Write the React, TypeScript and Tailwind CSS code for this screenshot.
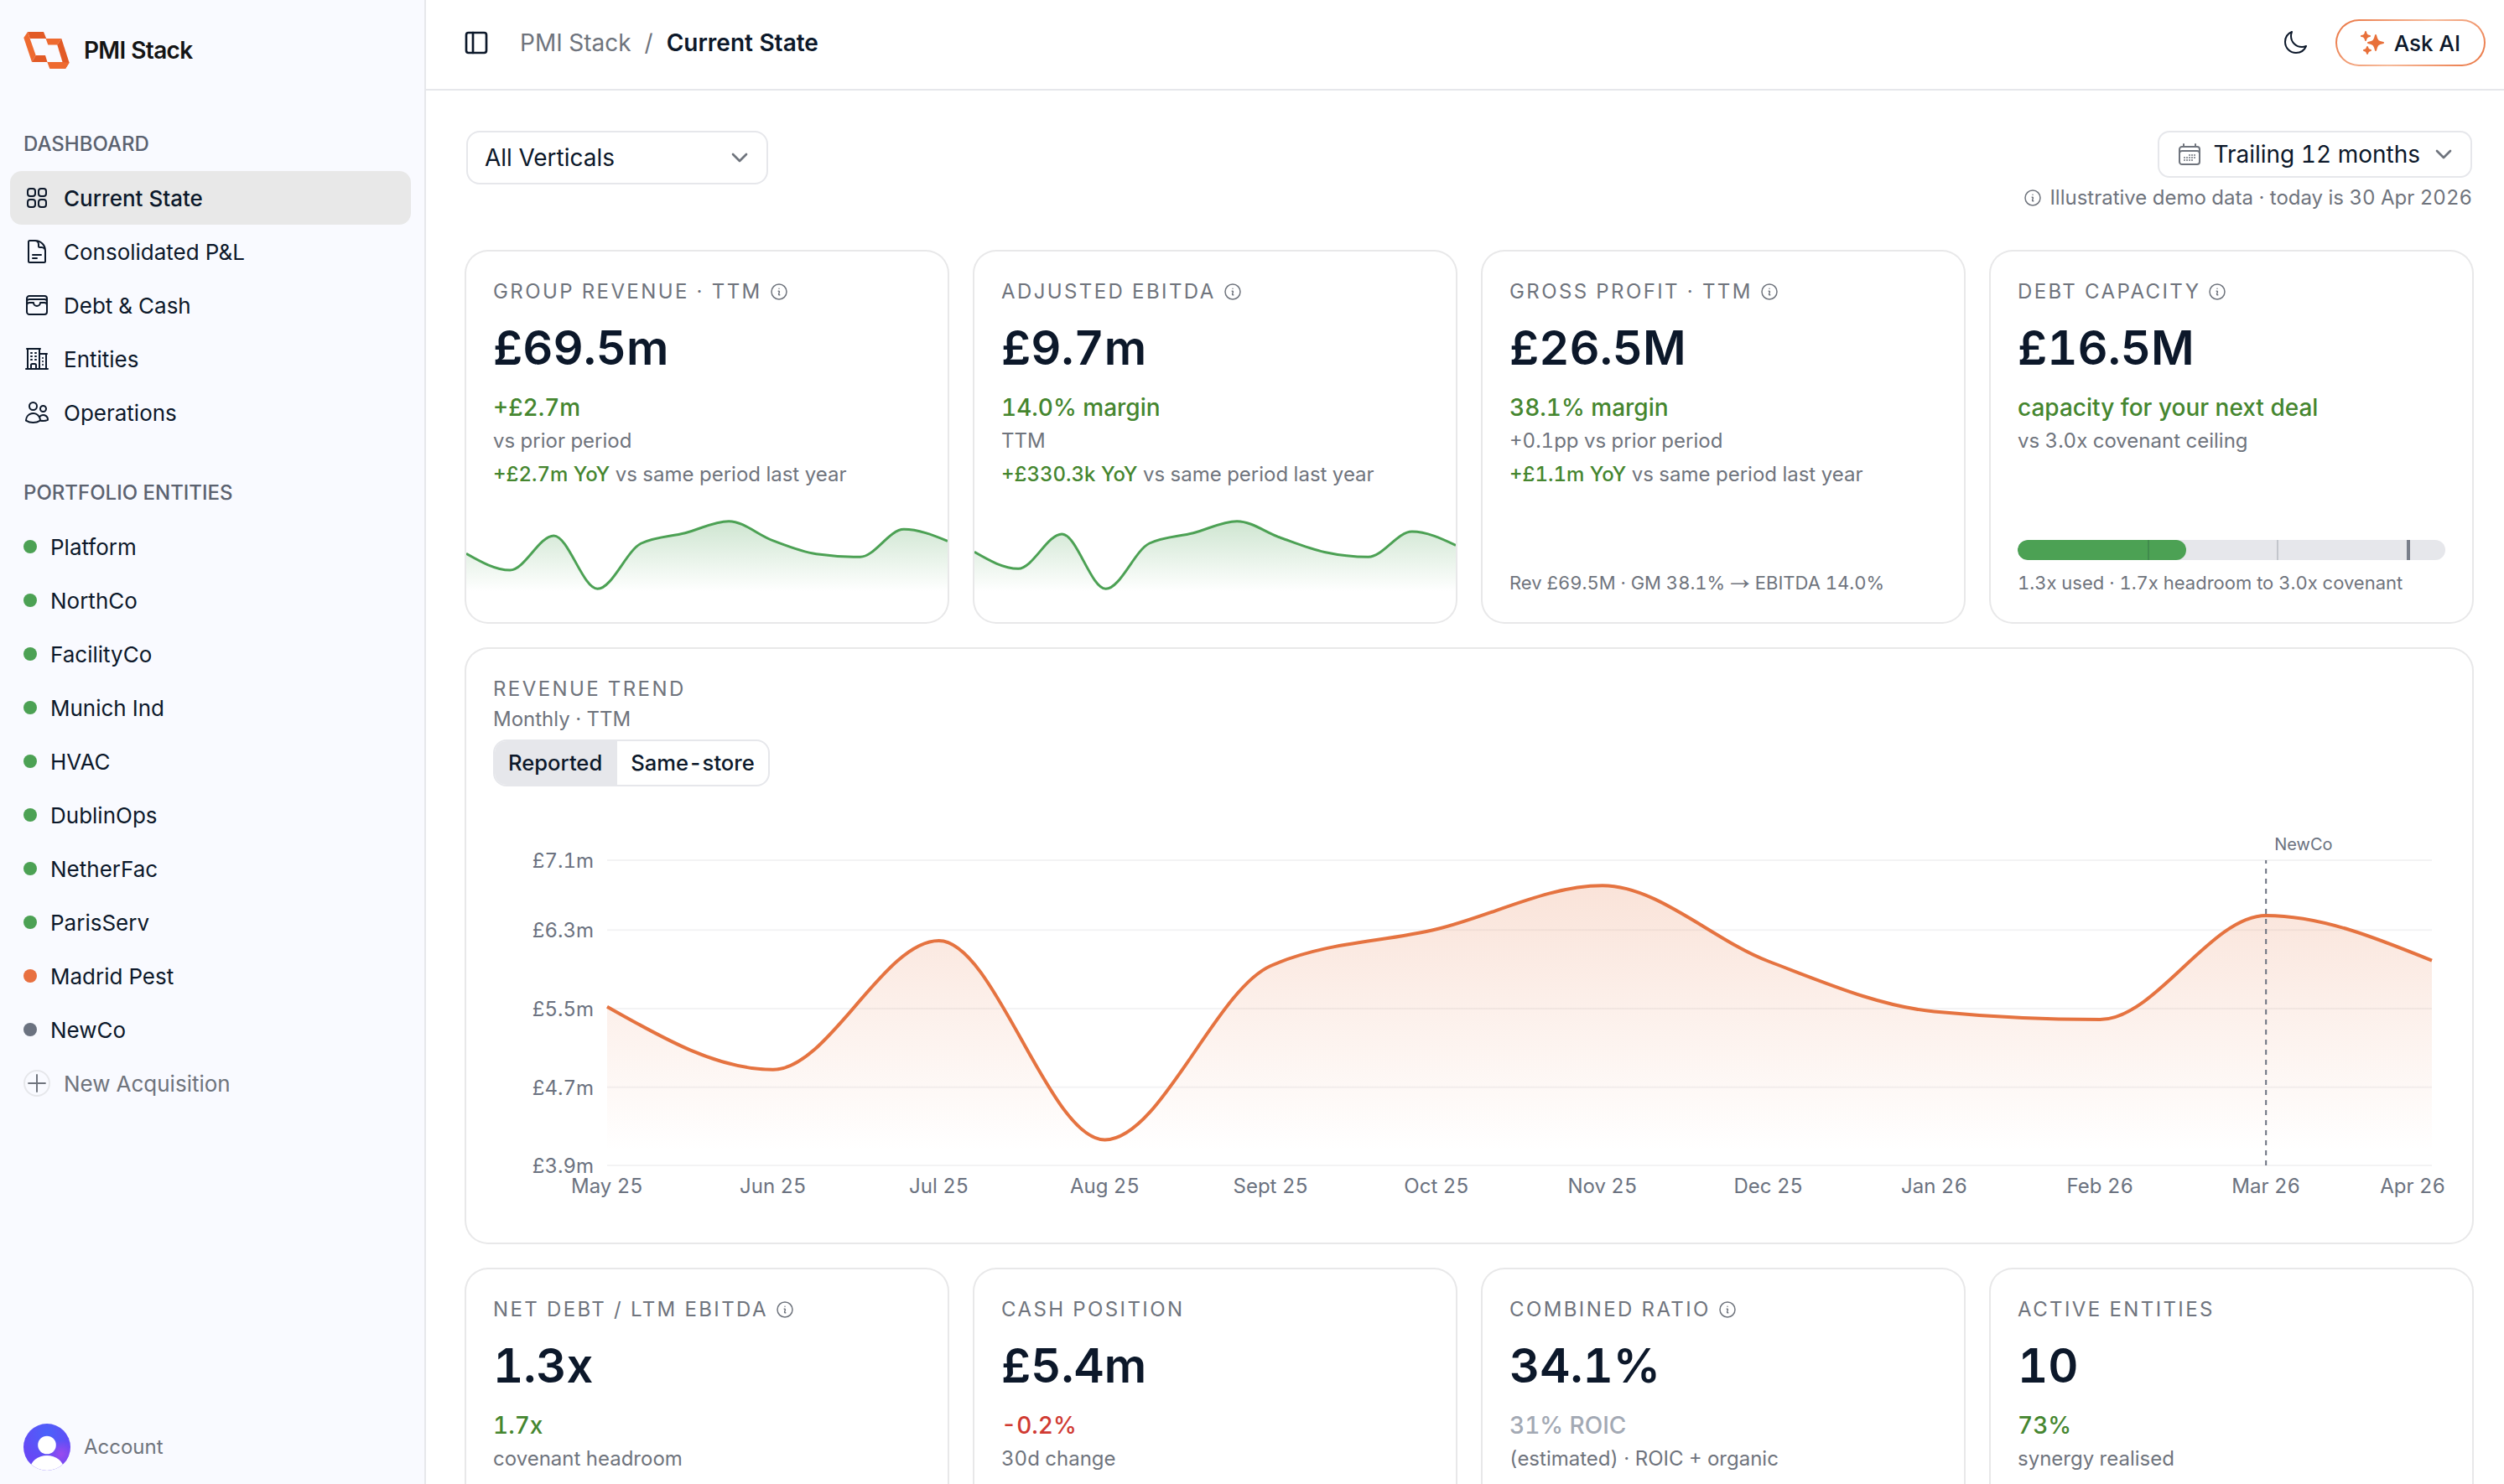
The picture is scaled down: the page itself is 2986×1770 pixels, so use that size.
import React from 'react';
import clsx from 'clsx';
import { ChevronDown, PanelLeft, Plus } from 'lucide-react';
import {
  HiOutlineBuildingOffice2,
  HiOutlineCalendarDays,
  HiOutlineDocumentText,
  HiOutlineInformationCircle,
  HiOutlineMoon,
  HiOutlineSquares2X2,
  HiOutlineUsers,
  HiOutlineWallet,
  HiSparkles,
} from 'react-icons/hi2';

type Tone = 'positive' | 'negative' | 'muted';

interface Kpi {
  label: string;
  info?: boolean;
  value: string;
  delta: string;
  tone: Tone;
  note: string;
  yoy?: string;
  footer?: React.ReactNode;
}

const NAV = [
  { label: 'Current State', icon: HiOutlineSquares2X2, active: true },
  { label: 'Consolidated P&L', icon: HiOutlineDocumentText },
  { label: 'Debt & Cash', icon: HiOutlineWallet },
  { label: 'Entities', icon: HiOutlineBuildingOffice2 },
  { label: 'Operations', icon: HiOutlineUsers },
];

const ENTITIES = [
  { name: 'Platform', dot: 'bg-[#4ca154]' },
  { name: 'NorthCo', dot: 'bg-[#4ca154]' },
  { name: 'FacilityCo', dot: 'bg-[#4ca154]' },
  { name: 'Munich Ind', dot: 'bg-[#4ca154]' },
  { name: 'HVAC', dot: 'bg-[#4ca154]' },
  { name: 'DublinOps', dot: 'bg-[#4ca154]' },
  { name: 'NetherFac', dot: 'bg-[#4ca154]' },
  { name: 'ParisServ', dot: 'bg-[#4ca154]' },
  { name: 'Madrid Pest', dot: 'bg-[#e87040]' },
  { name: 'NewCo', dot: 'bg-[#6b7280]' },
];

const MONTHS = [
  'May 25', 'Jun 25', 'Jul 25', 'Aug 25', 'Sept 25', 'Oct 25',
  'Nov 25', 'Dec 25', 'Jan 26', 'Feb 26', 'Mar 26', 'Apr 26',
];

// y positions inside each svg
const REVENUE_SPARK = [48.3, 68, 27, 90.3, 36, 23.7, 9.7, 32.6, 48.7, 52.3, 19.3, 33.3];
const EBITDA_SPARK = [46.3, 66.3, 25, 90.3, 36, 23.7, 9.7, 29.5, 46.5, 52.3, 22, 38.3];
const TREND = [262.7, 337.8, 184, 421.5, 214, 170.3, 118.3, 208.5, 268.5, 278, 154, 207.7];
const GRID = [
  { label: '£7.1m', y: 88 },
  { label: '£6.3m', y: 171.3 },
  { label: '£5.5m', y: 265 },
  { label: '£4.7m', y: 358.7 },
  { label: '£3.9m', y: 452 },
];

// Monotone cubic interpolation (same maths as d3's curveMonotoneX)
function monotonePath(ys: number[], x0: number, x1: number) {
  const h = (x1 - x0) / (ys.length - 1);
  const n = ys.length;
  const slopes = ys.slice(1).map((y, i) => (y - ys[i]) / h);
  const t = new Array<number>(n).fill(0);
  for (let i = 1; i < n - 1; i++) {
    const a = slopes[i - 1];
    const b = slopes[i];
    const p = (a + b) / 2;
    t[i] = (Math.sign(a) + Math.sign(b)) * Math.min(Math.abs(a), Math.abs(b), 0.5 * Math.abs(p)) || 0;
  }
  t[0] = (3 * slopes[0] - t[1]) / 2;
  t[n - 1] = (3 * slopes[n - 2] - t[n - 2]) / 2;

  let d = `M${x0},${ys[0]}`;
  for (let i = 0; i < n - 1; i++) {
    const xa = x0 + h * i;
    const xb = xa + h;
    d += `C${xa + h / 3},${ys[i] + (t[i] * h) / 3} ${xb - h / 3},${ys[i + 1] - (t[i + 1] * h) / 3} ${xb},${ys[i + 1]}`;
  }
  return d;
}

const Logo = () => (
  <svg width="56" height="48" viewBox="28 36 56 48">
    <path d="M33 38H52L55.2 46.1H35.7Z" fill="#e25a26" />
    <path d="M33 38L28.3 44.9L38 73.9L42.7 66.1L35.7 46.1Z" fill="#ee6a30" />
    <path d="M42.7 66.1H54L56.5 73.9H38Z" fill="#e25a26" />
    <path d="M54.6 46.1H73.3L68.3 53.5H57.3Z" fill="#ee6a30" />
    <path d="M73.3 46.1L82.6 74.7L78 82L74.5 73.9L68.3 53.5Z" fill="#e25a26" />
    <path d="M56.3 73.9H74.5L82.6 74.7L78 82H59.3Z" fill="#ee6a30" />
  </svg>
);

const Avatar = () => (
  <svg width="56" height="56" viewBox="0 0 56 56">
    <defs>
      <radialGradient id="avatarBlue" cx="0.5" cy="0.2" r="0.6">
        <stop offset="0" stopColor="#4a62fa" />
        <stop offset="1" stopColor="#6648f5" />
      </radialGradient>
      <radialGradient id="avatarPink" cx="0.8" cy="0.65" r="0.3">
        <stop offset="0" stopColor="#9a4bee" />
        <stop offset="1" stopColor="#9a4bee" stopOpacity="0" />
      </radialGradient>
      <clipPath id="avatarClip">
        <circle cx="28" cy="28" r="28" />
      </clipPath>
    </defs>
    <g clipPath="url(#avatarClip)">
      <rect width="56" height="56" fill="url(#avatarBlue)" />
      <rect width="56" height="56" fill="url(#avatarPink)" />
      <circle cx="28" cy="25.5" r="10.8" fill="#fff" />
      <ellipse cx="28" cy="54" rx="20" ry="16" fill="#fff" />
    </g>
  </svg>
);

const Sidebar = () => (
  <aside className="flex w-[508px] shrink-0 flex-col border-r-2 border-[#e6e7eb] bg-[#f9faff]">
    <div className="flex h-[120px] items-center gap-4 pl-7">
      <Logo />
      <span className="text-[28px] font-semibold tracking-tight text-[#141414]">PMI Stack</span>
    </div>

    <div className="flex h-[84px] items-center pt-5 pl-7 text-[24px] font-medium text-[#5b6270]">DASHBOARD</div>
    <nav className="flex flex-col pr-4 pl-3">
      {NAV.map(({ label, icon: Icon, active }) => (
        <a
          key={label}
          className={clsx(
            'flex h-16 items-center gap-4 rounded-[14px] pl-4 text-[26px]',
            active && 'bg-[#e8e8e8] font-medium'
          )}
        >
          <Icon size={32} />
          {label}
        </a>
      ))}
    </nav>

    <div className="flex h-24 items-center pt-8 pl-7 text-[24px] font-medium text-[#5b6270]">PORTFOLIO ENTITIES</div>
    <div className="flex flex-col pl-7 text-[26px]">
      {ENTITIES.map((entity) => (
        <a key={entity.name} className="flex h-16 items-center gap-4">
          <span className={clsx('size-4 rounded-full', entity.dot)} />
          {entity.name}
        </a>
      ))}
      <button className="flex h-16 items-center gap-4 text-[#6f747d]">
        <span className="flex size-8 items-center justify-center rounded-full border-2 border-[#e6e7eb]">
          <Plus size={34} strokeWidth={1.4} className="shrink-0" />
        </span>
        New Acquisition
      </button>
    </div>

    <div className="mt-auto flex items-center gap-4 pb-4 pl-7 text-[24px] text-[#6f747d]">
      <Avatar />
      Account
    </div>
  </aside>
);

const Header = () => (
  <header className="flex h-[108px] shrink-0 items-center justify-between border-b-2 border-[#e6e7eb] pr-[22px] pb-1 pl-11">
    <div className="flex items-center text-[28px]">
      <PanelLeft size={32} />
      <div className="flex gap-4 pl-9">
        <span className="text-[#6f747d]">PMI Stack</span>
        <span className="text-[#6f747d]">/</span>
        <span className="font-semibold">Current State</span>
      </div>
    </div>
    <div className="flex items-center gap-8">
      <HiOutlineMoon size={32} />
      <div className="rounded-full bg-linear-135 from-[#e8703a] via-[#f6bb9b] to-[#e8703a] p-[2px]">
        <button className="flex h-[52px] items-center gap-2.5 rounded-full bg-white pr-7 pl-[26px] text-[26px] font-medium">
          <HiSparkles size={32} className="-scale-x-100 text-[#e8703a]" />
          Ask AI
        </button>
      </div>
    </div>
  </header>
);

const Filters = () => (
  <div className="flex items-start justify-between">
    <button className="flex h-16 w-[360px] items-center justify-between rounded-2xl border-2 border-[#e6e7eb] pr-4 pl-5 text-[28px]">
      All Verticals
      <ChevronDown size={32} className="text-[#6f747d]" />
    </button>
    <div className="flex flex-col items-end">
      <button className="flex h-14 items-center gap-3 rounded-[14px] border-2 border-[#e6e7eb] pr-4 pl-5 text-[28px]">
        <HiOutlineCalendarDays size={32} className="text-[#6f747d]" />
        Trailing 12 months
        <ChevronDown size={32} className="text-[#6f747d]" />
      </button>
      <div className="mt-2 flex h-8 items-center gap-2 text-[24px] text-[#6f747d]">
        <HiOutlineInformationCircle size={24} />
        Illustrative demo data · today is 30 Apr 2026
      </div>
    </div>
  </div>
);

const Sparkline = ({ id, points }: { id: string; points: number[] }) => {
  const line = monotonePath(points, 0, 574);
  return (
    <svg width="574" height="98" viewBox="0 0 574 98" className="-mx-8">
      <defs>
        <linearGradient id={id} x1="0" y1="0" x2="0" y2="1">
          <stop offset="0" stopColor="#4ca154" stopOpacity="0.27" />
          <stop offset="0.95" stopColor="#4ca154" stopOpacity="0" />
        </linearGradient>
      </defs>
      <path d={`${line}L574,98L0,98Z`} fill={`url(#${id})`} />
      <path d={line} fill="none" stroke="#4ca154" strokeWidth="3" />
    </svg>
  );
};

const CovenantBar = ({ used, covenant, max }: { used: number; covenant: number; max: number }) => {
  const pct = (v: number) => `${(v / max) * 100}%`;
  return (
    <div className="relative mb-3 h-6 overflow-hidden rounded-full bg-[#e6e7eb]">
      <div className="h-full rounded-full bg-[#4ca154]" style={{ width: pct(used) }} />
      <div className="absolute inset-y-0 w-0.5 bg-[#0c182a]/16" style={{ left: pct(1) }} />
      <div className="absolute inset-y-0 w-0.5 bg-[#0c182a]/16" style={{ left: pct(2) }} />
      <div className="absolute inset-y-0 w-1 bg-[#787e8a]" style={{ left: pct(covenant) }} />
    </div>
  );
};

const TONES: Record<Tone, string> = {
  positive: 'text-[#45862f]',
  negative: 'text-[#d03a32]',
  muted: 'text-[#a3a9b4]',
};

const TOP_KPIS: Kpi[] = [
  {
    label: 'GROUP REVENUE · TTM',
    info: true,
    value: '£69.5m',
    delta: '+£2.7m',
    tone: 'positive',
    note: 'vs prior period',
    yoy: '+£2.7m YoY',
    footer: <Sparkline id="sparkRevenue" points={REVENUE_SPARK} />,
  },
  {
    label: 'ADJUSTED EBITDA',
    info: true,
    value: '£9.7m',
    delta: '14.0% margin',
    tone: 'positive',
    note: 'TTM',
    yoy: '+£330.3k YoY',
    footer: <Sparkline id="sparkEbitda" points={EBITDA_SPARK} />,
  },
  {
    label: 'GROSS PROFIT · TTM',
    info: true,
    value: '£26.5M',
    delta: '38.1% margin',
    tone: 'positive',
    note: '+0.1pp vs prior period',
    yoy: '+£1.1m YoY',
    footer: (
      <p className="text-[22px] leading-[30px] text-[#6f747d]">
        Rev £69.5M · GM 38.1%{' '}
        <span className="font-['Noto_Sans_Math','Noto_Sans','Liberation_Serif'] text-[23.5px] leading-none">→</span> EBITDA
        14.0%
      </p>
    ),
  },
  {
    label: 'DEBT CAPACITY',
    info: true,
    value: '£16.5M',
    delta: 'capacity for your next deal',
    tone: 'positive',
    note: 'vs 3.0x covenant ceiling',
    footer: (
      <div>
        <CovenantBar used={1.3} covenant={3} max={3.3} />
        <p className="text-[22px] leading-[30px] text-[#6f747d]">1.3x used · 1.7x headroom to 3.0x covenant</p>
      </div>
    ),
  },
];

const BOTTOM_KPIS: Kpi[] = [
  { label: 'NET DEBT / LTM EBITDA', info: true, value: '1.3x', delta: '1.7x', tone: 'positive', note: 'covenant headroom' },
  { label: 'CASH POSITION', value: '£5.4m', delta: '-0.2%', tone: 'negative', note: '30d change' },
  { label: 'COMBINED RATIO', info: true, value: '34.1%', delta: '31% ROIC', tone: 'muted', note: '(estimated) · ROIC + organic' },
  { label: 'ACTIVE ENTITIES', value: '10', delta: '73%', tone: 'positive', note: 'synergy realised' },
];

const KpiCard = ({ kpi }: { kpi: Kpi }) => (
  <div className="flex h-[442px] flex-col rounded-[26px] p-8 ring-2 ring-[#e8e8e9]">
    <div className="flex h-8 items-center gap-2 text-[24px] leading-8 tracking-widest text-[#6f747d]">
      {kpi.label}
      {kpi.info && <HiOutlineInformationCircle size={24} />}
    </div>
    <div className="mt-4 text-[56px] leading-[70px] font-semibold">{kpi.value}</div>
    <div className={clsx('mt-4 text-[28px] leading-10 font-medium', TONES[kpi.tone])}>{kpi.delta}</div>
    <div className="mt-1 text-[24px] leading-8 text-[#6f747d]">{kpi.note}</div>
    {kpi.yoy && (
      <div className="mt-2 text-[24px] leading-8 text-[#6f747d]">
        <span className="font-medium text-[#45862f]">{kpi.yoy}</span> vs same period last year
      </div>
    )}
    <div className="mt-auto">{kpi.footer}</div>
  </div>
);

const TrendChart = () => {
  const x = (i: number) => 136 + (2176 / 11) * i;
  const line = monotonePath(TREND, 136, 2312);
  return (
    <svg width="2328" height="512" viewBox="0 0 2328 512">
      <defs>
        <linearGradient id="trendFill" x1="0" y1="0" x2="0" y2="1">
          <stop offset="0" stopColor="#e57340" stopOpacity="0.2" />
          <stop offset="0.95" stopColor="#e57340" stopOpacity="0" />
        </linearGradient>
      </defs>
      {GRID.map((g) => (
        <g key={g.label}>
          <line x1="136" x2="2312" y1={g.y} y2={g.y} stroke="#f3f3f4" strokeWidth="2" />
          <text x="120" y={g.y + 9} textAnchor="end" fontSize="24" fill="#6b7280">
            {g.label}
          </text>
        </g>
      ))}
      <path d={`${line}L2312,452L136,452Z`} fill="url(#trendFill)" />
      <line x1={x(10)} x2={x(10)} y1="88" y2="452" stroke="#6b7280" strokeWidth="2" strokeDasharray="6 6" strokeDashoffset="2" />
      <path d={line} fill="none" stroke="#e57340" strokeWidth="4" />
      <text x={x(10) + 10} y="76" fontSize="20" fill="#6b7280">
        NewCo
      </text>
      {MONTHS.map((m, i) => {
        const last = i === MONTHS.length - 1;
        return (
          <text key={m} x={last ? 2328 : x(i)} y="485" textAnchor={last ? 'end' : 'middle'} fontSize="24" fill="#6b7280">
            {m}
          </text>
        );
      })}
    </svg>
  );
};

const RevenueTrend = () => (
  <section className="flex h-[708px] flex-col items-start rounded-[26px] p-8 ring-2 ring-[#e8e8e9]">
    <div className="text-[24px] leading-8 tracking-widest text-[#6f747d]">REVENUE TREND</div>
    <div className="mt-1 text-[24px] leading-8 text-[#6f747d]">Monthly · TTM</div>
    <div className="mt-2 flex h-14 overflow-hidden rounded-2xl border-2 border-[#e6e7eb] text-[25.6px] font-medium">
      <button className="border-r-2 border-[#e6e7eb] bg-[#e6e7eb] px-4">Reported</button>
      <button className="px-4">Same-store</button>
    </div>
    <TrendChart />
  </section>
);

export default function App() {
  return (
    <div className="flex h-[1770px] w-[2986px] overflow-hidden bg-white font-['Inter',sans-serif] text-[#0c182a] tabular-nums">
      <Sidebar />
      <div className="flex min-w-0 flex-1 flex-col">
        <Header />
        <main className="flex flex-col pt-12 pr-[38px] pl-12">
          <Filters />
          <div className="mt-12 grid grid-cols-4 gap-8">
            {TOP_KPIS.map((kpi) => (
              <KpiCard key={kpi.label} kpi={kpi} />
            ))}
          </div>
          <div className="mt-8">
            <RevenueTrend />
          </div>
          <div className="mt-8 grid grid-cols-4 gap-8">
            {BOTTOM_KPIS.map((kpi) => (
              <KpiCard key={kpi.label} kpi={kpi} />
            ))}
          </div>
        </main>
      </div>
    </div>
  );
}
